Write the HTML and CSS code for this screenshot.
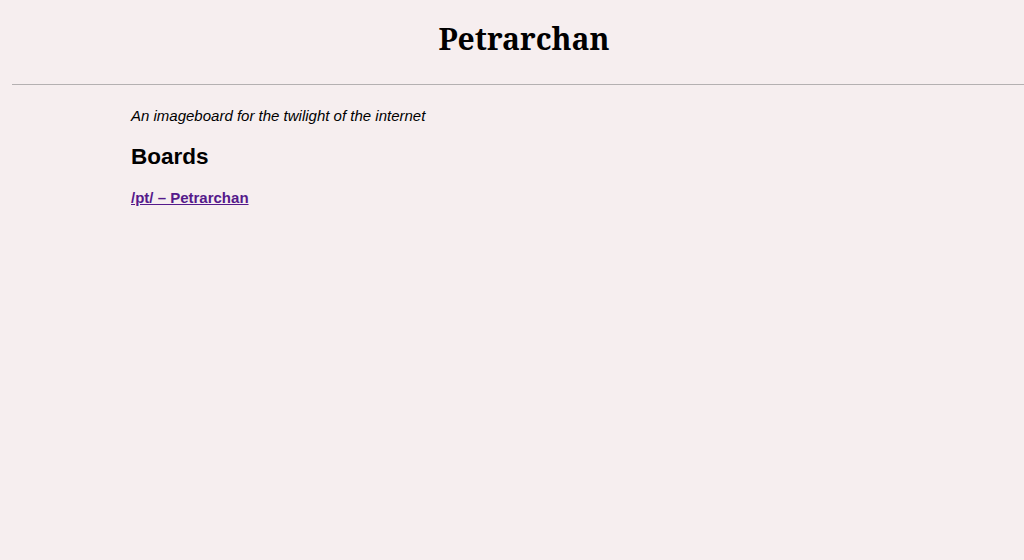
FILE: index.html
```html
<!DOCTYPE html>
<html lang="en">
<head>
<meta charset="utf-8">
<title>Petrarchan</title>
<link rel="stylesheet" href="styles.css">
</head>
<body>
<header class="site-header">
  <h1 class="site-title">Petrarchan</h1>
</header>
<main class="content">
  <p class="tagline">An imageboard for the twilight of the internet</p>
  <h2 class="section-title">Boards</h2>
  <ul class="board-list">
    <li><a class="board-link" href="#pt">/pt/ – Petrarchan</a></li>
  </ul>
</main>
</body>
</html>
```
FILE: styles.css
```css
html {
  overflow-x: hidden;
  background: #f6eeef;
}
body {
  margin: 0;
  background: #f6eeef;
  font-family: "Liberation Sans", Arial, sans-serif;
  color: #000;
}
.site-header {
  margin-left: 12px;
  width: 1024px;
  border-bottom: 1px solid #b4b0b1;
  padding: 16px 0 23px;
  text-align: center;
}
.site-title {
  margin: 0;
  font-family: "Noto Serif", "DejaVu Serif", serif;
  font-size: 30px;
  font-weight: 700;
  line-height: 45px;
}
.content {
  margin-left: 131px;
  padding-top: 22px;
}
.tagline {
  margin: 0;
  font-style: italic;
  font-size: 15px;
  line-height: 18px;
}
.section-title {
  margin: 19px 0 0;
  font-size: 22.5px;
  line-height: 26px;
  font-weight: 700;
}
.board-list {
  list-style: none;
  margin: 19px 0 0;
  padding: 0;
  line-height: 18px;
}
.board-link {
  font-weight: 700;
  font-size: 15px;
  color: #551a8b;
}
```
